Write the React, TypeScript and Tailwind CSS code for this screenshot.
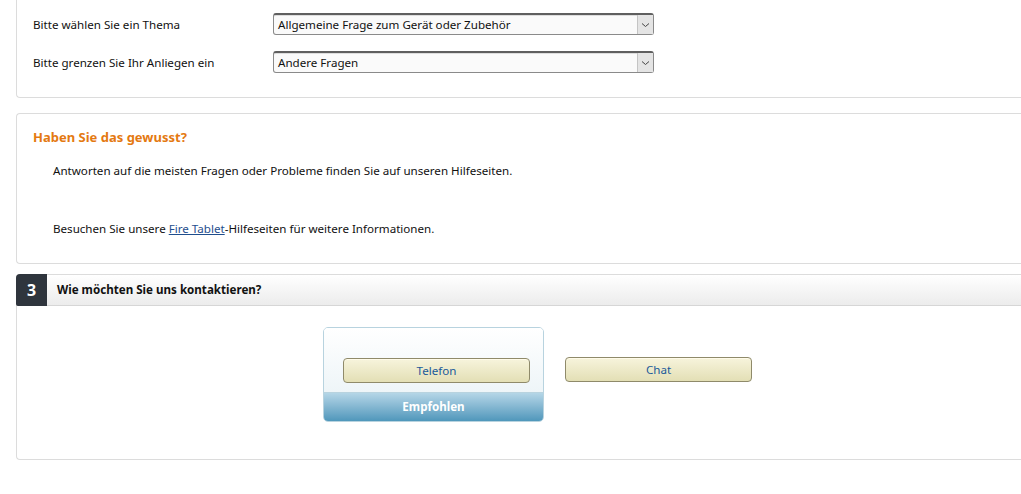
import React from "react";

const font = { fontFamily: '"Noto Sans", "Open Sans", Arial, sans-serif' };

function Select({ value }: { value: string }) {
  return (
    <div className="relative flex h-[22px] w-[381px] items-center rounded-[3px] border border-[#8a8a8a] border-t-[#5f5f5f] border-t-2 bg-[#fafafa] pl-[4px] text-[11.6px] text-[#111] shadow-[inset_0_1px_0_#ddd]">
      <span className="leading-none">{value}</span>
      <div className="absolute right-0 top-0 flex h-full w-[16px] items-center justify-center border-l border-[#c4c4c4] bg-[#e4e4e4]">
        <svg width="9" height="6" viewBox="0 0 9 6"><path d="M1 1.5 L4.5 4.5 L8 1.5" fill="none" stroke="#444" strokeWidth="1" /></svg>
      </div>
    </div>
  );
}

function YellowButton({ label }: { label: string }) {
  return (
    <div className="flex h-[25px] w-[187px] items-center justify-center rounded-[4px] border border-[#8f8a6a] bg-gradient-to-b from-[#f7f4dc] to-[#e3dfb5] text-[11.6px] text-[#1a5a9a] shadow-[inset_0_1px_0_#fffbe9]">
      {label}
    </div>
  );
}

export default function App() {
  return (
    <div className="h-[494px] w-[1021px] overflow-hidden bg-white text-[#111]" style={font}>
      <div className="pl-[16px]">
        {/* Card 1 */}
        <div className="-mt-[10px] h-[108px] rounded-bl-[4px] border-b border-l border-[#dcdcdc] pt-[23px]">
          <div className="flex items-center">
            <div className="w-[256px] pl-[16px] pt-[2px] text-[11.6px]">Bitte wählen Sie ein Thema</div>
            <Select value="Allgemeine Frage zum Gerät oder Zubehör" />
          </div>
          <div className="mt-[16px] flex items-center">
            <div className="w-[256px] pl-[16px] pt-[2px] text-[11.6px]">Bitte grenzen Sie Ihr Anliegen ein</div>
            <Select value="Andere Fragen" />
          </div>
        </div>

        {/* Card 2 */}
        <div className="mt-[15px] h-[151px] rounded-l-[4px] border-y border-l border-[#dcdcdc] pt-[14px]">
          <div className="pl-[16px] text-[13px] font-bold text-[#e47911]">Haben Sie das gewusst?</div>
          <div className="mt-[14px] pl-[36px] text-[11.6px]">
            Antworten auf die meisten Fragen oder Probleme finden Sie auf unseren Hilfeseiten.
          </div>
          <div className="mt-[41px] pl-[36px] text-[11.6px]">
            Besuchen Sie unsere <span className="text-[#1f4e8d] underline">Fire Tablet</span>-Hilfeseiten für weitere Informationen.
          </div>
        </div>

        {/* Section 3 */}
        <div className="mt-[10px] h-[186px] rounded-l-[4px] border-y border-l border-[#dcdcdc]">
          <div className="flex h-[31px] items-center border-b border-[#d6d6d6] bg-gradient-to-b from-white to-[#ececec]">
            <div className="-ml-px -mt-px flex h-[32px] w-[31px] items-center justify-center rounded-tl-[4px] rounded-bl-[2px] bg-[#2f353d] text-[16px] font-bold text-white">
              3
            </div>
            <div className="pl-[10px] text-[11.6px] font-bold text-[#111]">Wie möchten Sie uns kontaktieren?</div>
          </div>
          <div className="flex items-start pl-[306px] pt-[21px]">
            <div className="w-[221px] overflow-hidden rounded-[5px] border border-[#b8d3df]">
              <div className="flex h-[64px] items-end bg-gradient-to-b from-white to-[#eef5f8] pb-[9px] pl-[19px]">
                <YellowButton label="Telefon" />
              </div>
              <div className="flex h-[29px] items-center justify-center border-t border-[#b8d3df] bg-gradient-to-b from-[#b5d6e7] to-[#4f97bb] text-[11.6px] font-bold text-white">
                Empfohlen
              </div>
            </div>
            <div className="ml-[21px] mt-[30px]">
              <YellowButton label="Chat" />
            </div>
          </div>
        </div>
      </div>
    </div>
  );
}
